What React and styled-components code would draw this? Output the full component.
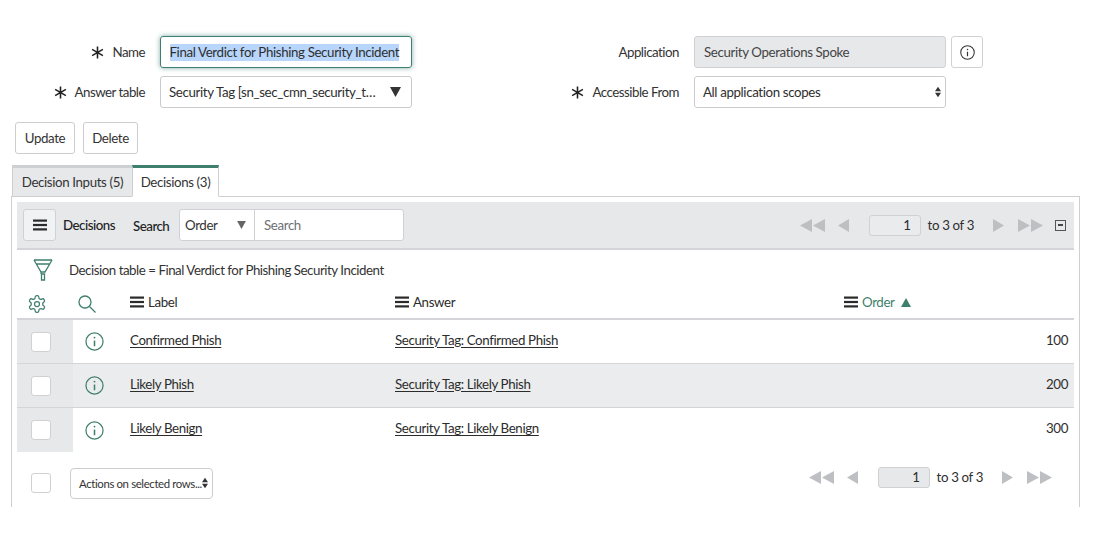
import React from "react";
import styled, { createGlobalStyle } from "styled-components";

const Global = createGlobalStyle`
  html, body { margin: 0; padding: 0; background: #fff; }
  body { color: #2e2e2e; }
  * { box-sizing: border-box; }
`;
const Page = styled.div`
  width: 1100px; height: 546px; padding-top: 36px; overflow: hidden;
  font-family: Lato, "Open Sans", sans-serif;
  font-size: 13.3px; letter-spacing: -0.37px;
`;
const FormGrid = styled.div`
  display: grid; grid-template-columns: 555px 1fr; row-gap: 8px;
`;
const Field = styled.div`display: flex; align-items: center; height: 32px;`;
const Label = styled.label`
  width: ${p => p.$w}px; flex: none; display: flex; justify-content: flex-end; align-items: center;
  gap: 8px; padding-right: ${p => p.$pr}px; color: #333; letter-spacing: -0.5px;
`;
const Star = () => (
  <svg width="13" height="13" viewBox="0 0 14 14" stroke="#222" strokeWidth="1.7" fill="none">
    <path d="M7 .5V13.5M1.2 3.6 12.8 10.4M12.8 3.6 1.2 10.4" />
  </svg>
);
const NameInput = styled.div`
  width: 252px; height: 32px; border: 1.5px solid #3f7f72; border-radius: 3px;
  box-shadow: 0 0 5px rgba(63,127,114,.65); padding: 0 8.5px; display: flex; align-items: center;
  white-space: nowrap;
`;
const Sel = styled.span`background: #b8d6fb; line-height: 17px; height: 17px; display: block;`;
const SelectBox = styled.div`
  width: ${p => p.$w}px; height: 32px; border: 1px solid #c9cbce; border-radius: 3px;
  display: flex; align-items: center; justify-content: space-between; padding: 0 ${p => p.$pr}px 0 8px; background: #fff;
  white-space: nowrap;
`;
const ReadOnly = styled.div`
  width: 252px; height: 32px; background: #e6e8ea; border: 1px solid #cfd1d4; border-radius: 3px;
  display: flex; align-items: center; padding: 0 9px; color: #444;
`;
const InfoBtn = styled.button`
  width: 32px; height: 32px; margin-left: 5px; border: 1px solid #cfd1d4; border-radius: 3px; background: #fff;
  padding: 0; display: flex; align-items: center; justify-content: center;
`;
const Buttons = styled.div`display: flex; gap: 8px; padding: 14px 0 0 15px;`;
const Btn = styled.button`
  height: 32px; padding: 0; width: ${p => p.$w}px; background: #fff; border: 1px solid #cbcdd0; border-radius: 3px;
  font: inherit; letter-spacing: inherit; color: #333;
`;
const Tabs = styled.div`display: flex; margin: 11px 0 0 12px; position: relative; z-index: 1; height: 32px;`;
const Tab = styled.div`
  height: 32px; width: ${p => p.$w}px; display: flex; align-items: center; justify-content: center; color: #333;
  background: ${p => p.$active ? "#fff" : "#e6e8ea"};
  border-top: 3px solid ${p => p.$active ? "#3f7f6d" : "#cdcfd2"};
  border-left: 1px solid #cdcfd2;
  border-right: ${p => p.$active ? "1px solid #cdcfd2" : "0"};
  border-bottom: ${p => p.$active ? "1px solid #fff" : "1px solid #cdcfd2"};
`;
const Panel = styled.div`
  width: 1069px; height: 311px; margin: -1px 0 0 11px; border: 1.5px solid #cdcfd2; border-bottom: 0;
  padding: 5px 5px 0 5px;
`;
const Toolbar = styled.div`
  height: 48px; background: #e6e8ea; border-bottom: 2px solid #d3d5d8; display: flex; align-items: center; padding-left: 6px;
`;
const MenuBtn = styled.button`
  width: 33px; height: 32px; padding: 0; border: 1px solid #cfd1d4; border-radius: 3px; background: #f1f2f3;
  display: flex; align-items: center; justify-content: center; margin-right: 7px;
`;
const Bars = ({ w = 14 }) => (
  <svg width={w} height="12" viewBox="0 0 14 12" fill="#2b2b2b" style={{ flex: "none" }}>
    <rect width="14" height="2.2" y="0.5" /><rect width="14" height="2.2" y="4.9" /><rect width="14" height="2.2" y="9.3" />
  </svg>
);
const ToolLabel = styled.span`
  width: ${p => p.$w}px; flex: none; color: #222; font-weight: 500; letter-spacing: -0.5px; padding-top: ${p => p.$pt || 0}px;
`;
const SearchGroup = styled.div`
  width: 225px; height: 32px; display: flex; background: #fff; border: 1px solid #cfd1d4; border-radius: 3px;
`;
const SearchSel = styled.div`
  width: 75px; border-right: 1px solid #cfd1d4; display: flex; align-items: center; justify-content: space-between;
  padding: 0 8px 0 5px; color: #333;
`;
const SearchInput = styled.div`flex: 1; display: flex; align-items: center; padding-left: 9px; color: #6e6f72;`;
const Pager = styled.div`
  margin-left: auto; display: flex; align-items: center; color: #2e2e2e;
`;
const PageInput = styled.div`
  width: 52px; height: 21px; border: 1px solid #cfd1d4; border-radius: 3px; background: ${p => p.$gray ? "#e6e8ea" : "#e9ebed"};
  display: flex; align-items: center; justify-content: flex-end; padding-right: 9px; margin: 0 7px 0 20px;
`;
const Tri = styled.svg`flex: none; fill: #bdbfc2; display: block; margin-left: ${p => p.$ml || 0}px;`;
const First = () => <Tri width="25" height="13" viewBox="0 0 25 13"><path d="M0 6.5 12 0V13ZM13 6.5 25 0V13Z" /></Tri>;
const Prev = () => <Tri width="11" height="13" viewBox="0 0 12 13" preserveAspectRatio="none" $ml={13}><path d="M0 6.5 12 0V13Z" /></Tri>;
const Next = () => <Tri width="11" height="13" viewBox="0 0 12 13" preserveAspectRatio="none" $ml={19}><path d="M12 6.5 0 0V13Z" /></Tri>;
const Last = () => <Tri width="25" height="13" viewBox="0 0 25 13" $ml={14}><path d="M12 6.5 0 0V13ZM25 6.5 13 0V13Z" /></Tri>;
const Collapse = styled.span`
  width: 11px; height: 11px; border: 1.2px solid #555; margin: 0 8px 0 12px; display: flex; align-items: center; justify-content: center;
  &::after { content: ""; width: 5px; height: 1.4px; background: #444; }
`;
const FilterRow = styled.div`
  height: 40px; display: flex; align-items: center; color: #333; padding-left: 16px; gap: 16px; letter-spacing: -0.47px;
`;
const Row = styled.div`
  display: grid; grid-template-columns: 56px 57px 265px 449px 1fr; height: ${p => p.$h}px;
  align-items: center; background: ${p => p.$gray ? "#ebeced" : "#fff"};
  border-bottom: ${p => p.$line ? `${p.$line}px solid #d3d5d8` : "0"};
`;
const CheckCell = styled.div`
  height: 100%; display: flex; align-items: center; justify-content: center; padding-right: 8px; background: #e6e8ea;
`;
const IconCell = styled.div`display: flex; align-items: center; padding-left: ${p => p.$pl}px;`;
const Check = styled.span`
  display: block; width: 20px; height: 20px; border: 1px solid #cfd1d4; border-radius: 3px; background: #fff; flex: none;
`;
const TextCell = styled.div`padding-bottom: 4px;`;
const Link = styled.a`color: #2c2c2c; text-decoration: underline; text-underline-offset: 2px;`;
const Head = styled.div`display: flex; align-items: center; gap: 4px; padding-bottom: 4px; color: #2c2c2c;`;
const SortName = styled.span`color: #3f7f6d;`;
const Up = styled.span`
  width: 0; height: 0; border-left: 5px solid transparent; border-right: 5px solid transparent; border-bottom: 9px solid #3f7f6d; margin-left: 2px;
`;
const Num = styled(TextCell)`text-align: right; padding-right: 6px;`;
const Footer = styled.div`display: flex; align-items: center; height: 32px; margin-top: 15px; padding-left: 14px;`;
const Actions = styled.div`
  width: 143px; height: 31px; margin-left: 19px; border: 1px solid #cbcdd0; border-radius: 4px; display: flex; align-items: center;
  justify-content: space-between; padding: 0 4px 0 8px; font-size: 11.4px; white-space: nowrap; color: #333;
`;
const FootPager = styled(Pager)`margin-right: 22px; margin-bottom: 12px;`;
const Caret = ({ w = 11, h = 10, c = "#333" }) => <svg width={w} height={h} viewBox="0 0 11 10" fill={c} style={{ flex: "none" }}><path d="M0 0H11L5.5 10Z" /></svg>;
const Updown = () => <svg width="6" height="12" viewBox="0 0 7 12" fill="#333" style={{ flex: "none" }}><path d="M3.5 0 7 5H0ZM3.5 12 0 7H7Z" /></svg>;
const Info = ({ s = 19, c = "#3f7f6d", w = 1.3 }) => (
  <svg width={s} height={s} viewBox="0 0 20 20" fill="none" stroke={c} strokeWidth={w}>
    <circle cx="10" cy="10" r="9" /><path d="M10 9v6" strokeWidth="1.6" /><circle cx="10" cy="5.9" r="1" fill={c} stroke="none" />
  </svg>
);
const Funnel = () => (
  <svg width="20" height="22" viewBox="0 0 20 22" fill="none" stroke="#3f7f6d" strokeWidth="1.3" style={{ flex: "none" }}>
    <path d="M1 1H19M1 1 8 13H12L19 1M3.5 5H16.5M8 13V15M8.5 15H11.5V21H8.5Z" />
  </svg>
);
const Gear = () => (
  <svg width="20" height="20" viewBox="0 0 24 24" fill="none" stroke="#3f7f6d" strokeWidth="1.5">
    <path d="M12.22 2h-.44a2 2 0 0 0-2 2v.18a2 2 0 0 1-1 1.73l-.43.25a2 2 0 0 1-2 0l-.15-.08a2 2 0 0 0-2.73.73l-.22.38a2 2 0 0 0 .73 2.73l.15.1a2 2 0 0 1 1 1.72v.51a2 2 0 0 1-1 1.74l-.15.09a2 2 0 0 0-.73 2.73l.22.38a2 2 0 0 0 2.73.73l.15-.08a2 2 0 0 1 2 0l.43.25a2 2 0 0 1 1 1.73V20a2 2 0 0 0 2 2h.44a2 2 0 0 0 2-2v-.18a2 2 0 0 1 1-1.73l.43-.25a2 2 0 0 1 2 0l.15.08a2 2 0 0 0 2.73-.73l.22-.39a2 2 0 0 0-.73-2.73l-.15-.08a2 2 0 0 1-1-1.74v-.5a2 2 0 0 1 1-1.74l.15-.09a2 2 0 0 0 .73-2.73l-.22-.38a2 2 0 0 0-2.73-.73l-.15.08a2 2 0 0 1-2 0l-.43-.25a2 2 0 0 1-1-1.73V4a2 2 0 0 0-2-2z" />
    <circle cx="12" cy="12" r="3" />
  </svg>
);
const Mag = () => (
  <svg width="18" height="18" viewBox="0 0 18 18" fill="none" stroke="#3f7f6d" strokeWidth="1.3">
    <circle cx="7" cy="7" r="6" /><path d="M11.5 11.5 17.5 17.5" />
  </svg>
);

const rows = [
  ["Confirmed Phish", "Security Tag: Confirmed Phish", "100"],
  ["Likely Phish", "Security Tag: Likely Phish", "200"],
  ["Likely Benign", "Security Tag: Likely Benign", "300"],
];

export default function App() {
  return (
    <Page>
      <Global />
      <FormGrid>
        <Field><Label $w={160} $pr={15}><Star />Name</Label><NameInput><Sel>Final Verdict for Phishing Security Incident</Sel></NameInput></Field>
        <Field><Label $w={139} $pr={15}>Application</Label><ReadOnly>Security Operations Spoke</ReadOnly><InfoBtn><Info s={15} c="#333" w={1.4} /></InfoBtn></Field>
        <Field><Label $w={160} $pr={15}><Star />Answer table</Label><SelectBox $w={252} $pr={10}>Security Tag [sn_sec_cmn_security_t…<Caret /></SelectBox></Field>
        <Field><Label $w={139} $pr={15}><Star />Accessible From</Label><SelectBox $w={252} $pr={4}>All application scopes<Updown /></SelectBox></Field>
      </FormGrid>
      <Buttons><Btn $w={60}>Update</Btn><Btn $w={55}>Delete</Btn></Buttons>
      <Tabs><Tab $w={120}>Decision Inputs (5)</Tab><Tab $w={87} $active>Decisions (3)</Tab></Tabs>
      <Panel>
        <Toolbar>
          <MenuBtn><Bars /></MenuBtn>
          <ToolLabel $w={70}>Decisions</ToolLabel>
          <ToolLabel $w={46} $pt={2}>Search</ToolLabel>
          <SearchGroup><SearchSel>Order<Caret w={9} h={8} c="#666" /></SearchSel><SearchInput>Search</SearchInput></SearchGroup>
          <Pager><First /><Prev /><PageInput>1</PageInput>to 3 of 3<Next /><Last /><Collapse /></Pager>
        </Toolbar>
        <FilterRow><Funnel />Decision table = Final Verdict for Phishing Security Incident</FilterRow>
        <Row $h={30} $line={2}>
          <IconCell $pl={10}><Gear /></IconCell>
          <IconCell $pl={5}><Mag /></IconCell>
          <Head><Bars />Label</Head>
          <Head><Bars />Answer</Head>
          <Head><Bars /><SortName>Order</SortName><Up /></Head>
        </Row>
        {rows.map((r, i) => (
          <Row key={r[0]} $h={44} $gray={i === 1} $line={i < 2 ? 1 : 0}>
            <CheckCell><Check /></CheckCell>
            <IconCell $pl={12}><Info /></IconCell>
            <TextCell><Link>{r[0]}</Link></TextCell>
            <TextCell><Link>{r[1]}</Link></TextCell>
            <Num>{r[2]}</Num>
          </Row>
        ))}
        <Footer>
          <Check />
          <Actions>Actions on selected rows...<Updown /></Actions>
          <FootPager><First /><Prev /><PageInput $gray>1</PageInput>to 3 of 3<Next /><Last /></FootPager>
        </Footer>
      </Panel>
    </Page>
  );
}
